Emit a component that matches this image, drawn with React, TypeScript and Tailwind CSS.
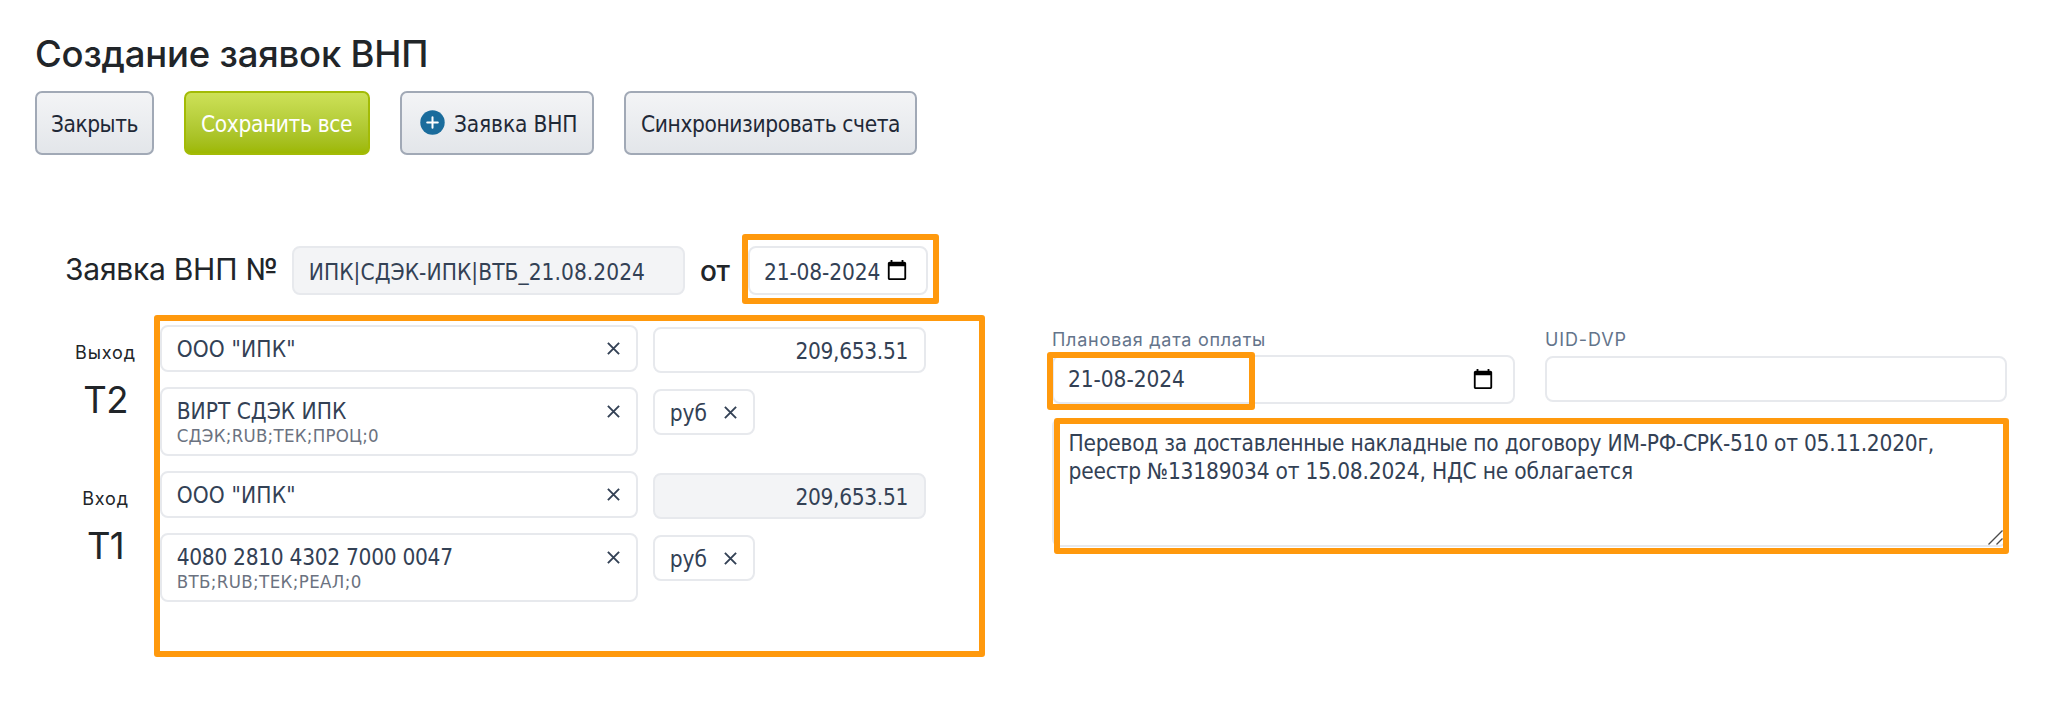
import type { ReactNode } from "react";

const FRAME = "pointer-events-none absolute rounded-[3px] border-[6px] border-[#ff990d]";
const FIELD = "rounded-[8px] border-2 border-[#e7e9ed] text-[22.5px] leading-[28px] text-[#334155]";

function CalendarIcon() {
  return (
    <svg className="size-[22px] shrink-0" viewBox="0 0 24 24" fill="#000">
      <path d="M20 3h-1V1h-2v2H7V1H5v2H4c-1.1 0-2 .9-2 2v16c0 1.1.9 2 2 2h16c1.1 0 2-.9 2-2V5c0-1.1-.9-2-2-2zm0 18H4V8h16v13z" />
    </svg>
  );
}

function ClearIcon() {
  return (
    <svg className="size-[13px] shrink-0" viewBox="0 0 13 13" stroke="#334155" strokeWidth="1.9">
      <path d="M0.9 0.9 12.1 12.1M12.1 0.9 0.9 12.1" />
    </svg>
  );
}

function PlusIcon() {
  return (
    <svg className="mr-[9px] mb-px size-[25px] shrink-0" viewBox="0 0 25 25">
      <circle cx="12.5" cy="12.5" r="12.2" fill="#1a6c9c" />
      <path d="M12.5 7.2v10.6M7.2 12.5h10.6" stroke="#fff" strokeWidth="2" strokeLinecap="round" />
    </svg>
  );
}

function Button({ className, children }: { className: string; children: ReactNode }) {
  return (
    <button
      className={`flex h-16 items-center rounded-[7px] border-2 text-[22.5px] leading-[28px] whitespace-nowrap ${className}`}
    >
      {children}
    </button>
  );
}

const GRAY = "border-[#a1a9b6] bg-linear-to-b from-[#f3f4f6] to-[#e3e6ea] text-[#1f2937]";

interface SideProps {
  label: string;
  code: string;
  company: string;
  account: ReactNode;
  details: ReactNode;
  readOnly?: boolean;
}

function Side({ label, code, company, account, details, readOnly }: SideProps) {
  return (
    <div className="flex">
      <div className="flex w-[105px] flex-col items-center pt-[16px] text-[#212529]">
        <div className="text-[18px] leading-[24px] tracking-[0.85px]">{label}</div>
        <div className="mt-[15px] text-[36.5px] leading-[40px] tracking-[-0.7px]">{code}</div>
      </div>
      <div className="ml-[2px] w-[478px] font-['DejaVu_Sans_Condensed','DejaVu_Sans',sans-serif]">
        <div className={`${FIELD} flex h-[47px] items-center justify-between pr-[16px] pl-[14.7px]`}>
          <span className="pt-px tracking-[0.15px]">{company}</span>
          <ClearIcon />
        </div>
        <div className={`${FIELD} mt-[15px] flex h-[69px] justify-between pr-[16px] pl-[14.7px]`}>
          <div className="pt-[8px]">
            <div className="leading-[28px]">{account}</div>
            <div className="-mt-px text-[18.5px] leading-[24px] text-[#6b7280]">{details}</div>
          </div>
          <div className="pt-[16px]">
            <ClearIcon />
          </div>
        </div>
      </div>
      <div className="ml-[15px] pt-[2px] font-['DejaVu_Sans_Condensed','DejaVu_Sans',sans-serif]">
        <div
          className={`${FIELD} flex h-[46px] w-[273px] items-center justify-end pt-[2px] pr-[16px] tracking-[-0.33px] ${readOnly ? "bg-[#f3f4f6]" : "bg-white"}`}
        >
          209,653.51
        </div>
        <div className={`${FIELD} mt-[16px] flex h-[46px] w-[102px] items-center justify-between pt-px pr-[16px] pl-[14.7px]`}>
          руб
          <ClearIcon />
        </div>
      </div>
    </div>
  );
}

export default function App() {
  return (
    <div className="h-[726px] w-[2048px] overflow-hidden bg-white pt-[34px] font-['Inter',sans-serif]">
      <h1 className="ml-[35px] text-[36.5px] leading-[40px] font-medium tracking-[-0.2px] text-[#212529]">
        Создание заявок ВНП
      </h1>
      <div className="mt-[17px] ml-[35px] flex font-['DejaVu_Sans_Condensed','DejaVu_Sans',sans-serif]">
        <Button className={`w-[119px] pt-px pl-[14px] tracking-[-0.46px] ${GRAY}`}>Закрыть</Button>
        <Button className="ml-[30px] w-[186px] border-[#a3bb06] bg-linear-to-b from-[#cde157] to-[#9db800] pt-px pl-[15px] tracking-[-0.36px] text-white">
          Сохранить все
        </Button>
        <Button className={`ml-[30px] w-[194px] pl-[18px] tracking-[-0.15px] ${GRAY}`}>
          <PlusIcon />
          <span className="pt-px">Заявка ВНП</span>
        </Button>
        <Button className={`ml-[30px] w-[293px] pt-px pl-[15px] tracking-[-0.38px] ${GRAY}`}>
          Синхронизировать счета
        </Button>
      </div>

      <div className="mt-[91px] ml-[64px] flex h-[49px] items-center text-[#212529]">
        <div className="w-[228px] pb-[3px] pl-px text-[30px] leading-[36px] tracking-[-0.25px] whitespace-nowrap">
          Заявка ВНП №
        </div>
        <div
          className={`${FIELD} flex h-[49px] w-[393px] items-center bg-[#f3f4f6] pt-[2px] pl-[14.7px] font-['DejaVu_Sans_Condensed','DejaVu_Sans',sans-serif] tracking-[0.05px]`}
        >
          ИПК|СДЭК-ИПК|ВТБ_21.08.2024
        </div>
        <div className="ml-[15px] w-[48px] text-[28px] leading-[36px] font-medium tracking-[-0.5px]">от</div>
        <div className={`${FIELD} relative flex h-[49px] w-[180px] items-center pl-[14px]`}>
          <span className="w-[122px] pt-[2px] font-['DejaVu_Sans_Condensed','DejaVu_Sans',sans-serif] tracking-[-0.15px]">
            21-08-2024
          </span>
          <div className="pb-[2px]">
            <CalendarIcon />
          </div>
          <div className={`${FRAME} -top-[14px] -left-[8px] h-[70px] w-[197px]`} />
        </div>
      </div>

      <div className="mt-[30px] flex">
        <div className="relative ml-[53px] flex w-[931px] flex-col gap-[15px]">
          <Side
            label="Выход"
            code="T2"
            company={'ООО "ИПК"'}
            account="ВИРТ СДЭК ИПК"
            details={<span className="tracking-[0.26px]">СДЭК;RUB;ТЕК;ПРОЦ;0</span>}
          />
          <Side
            label="Вход"
            code="T1"
            company={'ООО "ИПК"'}
            account={<span className="tracking-[-0.3px]">4080 2810 4302 7000 0047</span>}
            details={<span className="tracking-[0.38px]">ВТБ;RUB;ТЕК;РЕАЛ;0</span>}
            readOnly
          />
          <div className={`${FRAME} -top-[10px] left-[101px] h-[342px] w-[831px]`} />
        </div>

        <div className="ml-[68px] w-[955px] pt-[3px]">
          <div className="flex gap-[30px]">
            <div className="w-[463px]">
              <div className="h-[27px] text-[18px] leading-[24px] tracking-[0.74px] text-[#64748b]">
                Плановая дата оплаты
              </div>
              <div className={`${FIELD} relative flex h-[49px] items-center justify-between pr-[19px] pb-px pl-[14px]`}>
                <span className="font-['DejaVu_Sans_Condensed','DejaVu_Sans',sans-serif] tracking-[-0.08px]">
                  21-08-2024
                </span>
                <CalendarIcon />
                <div className={`${FRAME} -top-[5px] -left-[7px] h-[58px] w-[208px]`} />
              </div>
            </div>
            <div className="w-[462px]">
              <div className="h-[28px] text-[18px] leading-[24px] tracking-[0.87px] text-[#64748b]">UID-DVP</div>
              <div className={`${FIELD} h-[46px]`} />
            </div>
          </div>
          <div
            className={`${FIELD} relative mt-[14px] h-[129px] pt-[9px] pl-[14.5px] font-['DejaVu_Sans_Condensed','DejaVu_Sans',sans-serif] leading-[27.7px] whitespace-nowrap`}
          >
            <div className="tracking-[-0.24px]">
              Перевод за доставленные накладные по договору ИМ-РФ-СРК-510 от 05.11.2020г,
            </div>
            <div className="tracking-[-0.2px]">реестр №13189034 от 15.08.2024, НДС не облагается</div>
            <svg
              className="absolute right-[2px] bottom-0 size-[15px]"
              viewBox="0 0 15 15"
              fill="none"
              stroke="#4b4b4b"
              strokeWidth="1.4"
            >
              <path d="M0.5 14.5 14.5 0.5M8.5 14.5l6-6" />
            </svg>
            <div className={`${FRAME} -top-[2px] left-[0px] h-[136px] w-[955px]`} />
          </div>
        </div>
      </div>
    </div>
  );
}
